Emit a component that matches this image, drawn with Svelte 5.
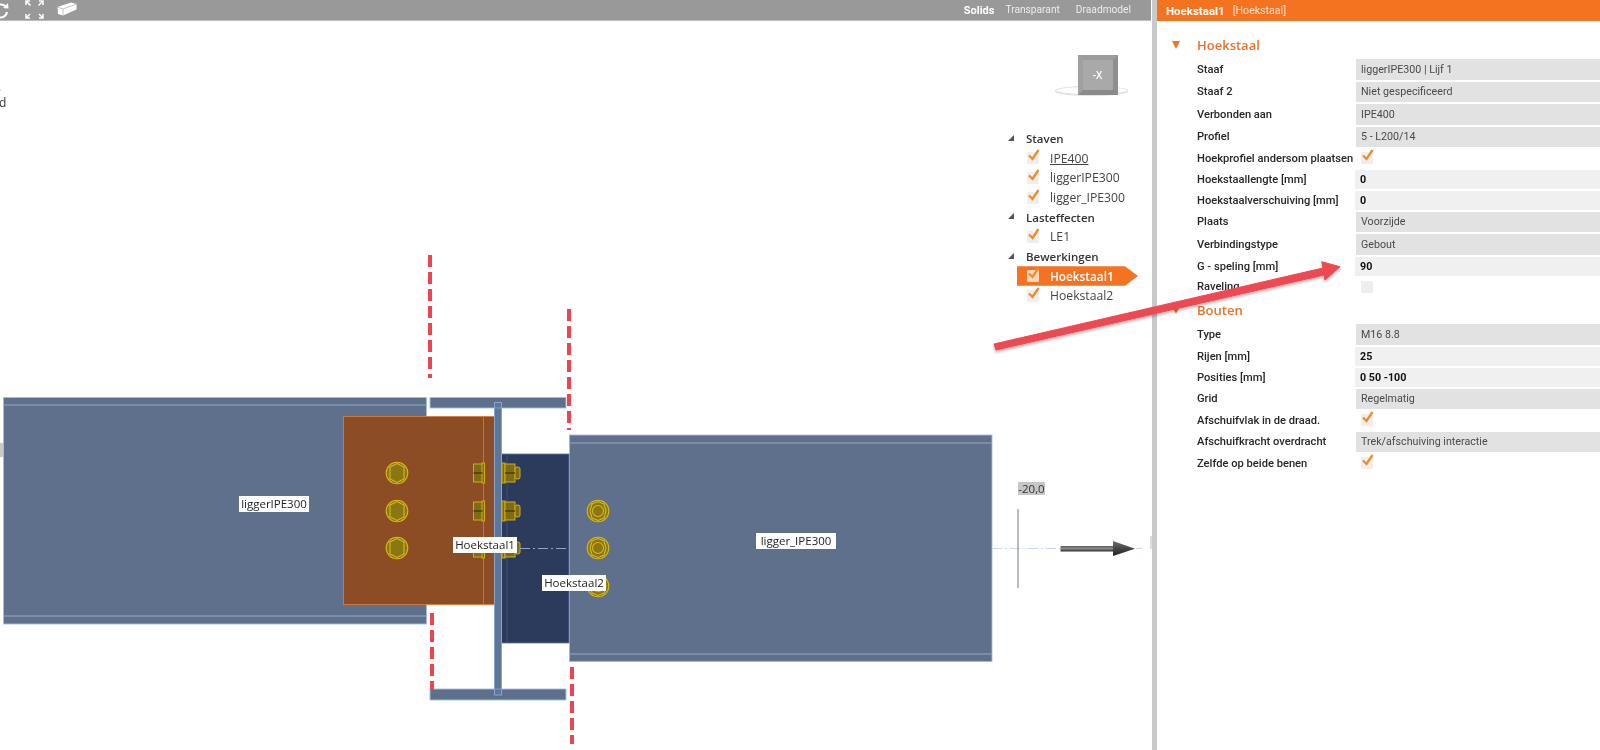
<script>
  const tree = [
    { type: 'group', label: 'Staven' },
    { type: 'item', label: 'IPE400', underline: true },
    { type: 'item', label: 'liggerIPE300' },
    { type: 'item', label: 'ligger_IPE300' },
    { type: 'group', label: 'Lasteffecten' },
    { type: 'item', label: 'LE1' },
    { type: 'group', label: 'Bewerkingen' },
    { type: 'item', label: 'Hoekstaal1', active: true },
    { type: 'item', label: 'Hoekstaal2' }
  ];
  const hoekstaal = [
    ['Staaf', 'dd', 'liggerIPE300 | Lijf 1'],
    ['Staaf 2', 'dd', 'Niet gespecificeerd'],
    ['Verbonden aan', 'dd', 'IPE400'],
    ['Profiel', 'dd', '5 - L200/14'],
    ['Hoekprofiel andersom plaatsen', 'cb', ''],
    ['Hoekstaallengte [mm]', 'in', '0'],
    ['Hoekstaalverschuiving [mm]', 'in', '0'],
    ['Plaats', 'dd', 'Voorzijde'],
    ['Verbindingstype', 'dd', 'Gebout'],
    ['G - speling [mm]', 'in', '90'],
    ['Raveling', 'off', '']
  ];
  const bouten = [
    ['Type', 'dd', 'M16 8.8'],
    ['Rijen [mm]', 'in', '25'],
    ['Posities [mm]', 'in', '0 50 -100'],
    ['Grid', 'dd', 'Regelmatig'],
    ['Afschuifvlak in de draad.', 'cb', ''],
    ['Afschuifkracht overdracht', 'dd', 'Trek/afschuiving interactie'],
    ['Zelfde op beide benen', 'cb', '']
  ];
  const sections = [
    { title: 'Hoekstaal', rows: hoekstaal },
    { title: 'Bouten', rows: bouten }
  ];
  const rowsY = [473, 511, 548];
</script>

{#snippet check()}
  <svg class="checkmark" viewBox="0 0 14 16" width="14" height="16" aria-hidden="true">
    <path d="M2 7.5 L5.5 11 L11.5 2" fill="none" stroke="#f28a25" stroke-width="2.3" />
  </svg>
{/snippet}

<div class="page">
  <main class="viewport">
    <header class="toolbar">
      <div class="tools">
        <svg class="icon-refresh" width="12" height="20" viewBox="0 0 12 20" aria-hidden="true">
          <path d="M0 4.5 A6.5 6.5 0 0 1 6.5 8" fill="none" stroke="#fff" stroke-width="2" />
          <path d="M3 8 L8.5 8.5 L8 3 Z" fill="#fff" />
          <path d="M7 12 A6.5 6.5 0 0 1 0 17.5" fill="none" stroke="#fff" stroke-width="2" />
        </svg>
        <svg class="icon-fit" width="19" height="19" viewBox="0 0 19 19" aria-hidden="true">
          <g fill="none" stroke="#fff" stroke-width="1.5">
            <path d="M1 5 V1 H5 M1 1 L5.5 5.5" />
            <path d="M14 1 H18 V5 M18 1 L13.5 5.5" />
            <path d="M1 14 V18 H5 M1 18 L5 14" />
            <path d="M14 18 H18 V14 M18 18 L14 14" />
          </g>
        </svg>
        <svg class="icon-box" width="20" height="14" viewBox="0 0 20 14" aria-hidden="true">
          <path d="M0.5 5 L14 0.5 L19.5 2 L19.5 7.5 L6 13.5 L1 12 Z" fill="#fff" />
          <path d="M0.5 5 L6 7 L19.5 2 M6 7 V13.5" fill="none" stroke="#b5b5b5" stroke-width="0.8" />
        </svg>
      </div>
      <nav class="modes">
        <span class="mode solid">Solids</span>
        <span class="mode">Transparant</span>
        <span class="mode">Draadmodel</span>
      </nav>
    </header>

    <div class="canvas">
      <svg class="drawing" width="1151" height="729" viewBox="0 21 1151 729" aria-label="Verbinding">
        <g class="steel">
          <rect x="3.5" y="397.5" width="423" height="226.5" />
          <rect x="430" y="397.5" width="136" height="10.5" />
          <rect x="430" y="689" width="136" height="11" />
          <rect x="569.5" y="435" width="422.5" height="226.5" />
        </g>
        <g stroke="#8fa9c6" stroke-width="1">
          <path d="M3.5 405 H426.5 M3.5 616 H426.5 M569.5 443 H992 M569.5 654 H992" />
        </g>
        <rect x="501.5" y="454" width="67.5" height="189" fill="#2c3a5c" stroke="#5b77a6" stroke-width="0.8" />
        <path d="M507 454 V643" stroke="#3d4f78" stroke-width="1" />
        <rect x="343.5" y="416.5" width="151" height="188" fill="#8c4d24" stroke="#d57c3f" stroke-width="0.9" />
        <path d="M483.5 416.5 V604.5" stroke="#cf6f33" stroke-width="1" />
        <rect x="494.5" y="402.5" width="7" height="292.5" fill="#5f769b" stroke="#86a4cc" stroke-width="1" />
        <path d="M494.5 408 H501.5 M494.5 689 H501.5" stroke="#86a4cc" stroke-width="0.8" />

        {#each rowsY as y}
          <g class="bolt">
            <circle cx="397" cy={y} r="10.8" />
            <polygon points={`390,${y - 6} 397,${y - 9.5} 404,${y - 6} 404,${y + 6} 397,${y + 9.5} 390,${y + 6}`} />
          </g>
          <g class="bolt-side">
            <rect x="473.5" y={y - 9} width="9" height="18" />
            <rect x="482" y={y - 10} width="2.5" height="20" />
            <path d={`M473.5 ${y} H482.5`} />
            <rect x="502" y={y - 10} width="3" height="20" />
            <rect x="505" y={y - 9} width="10" height="18" />
            <rect x="515" y={y - 6} width="5" height="12" rx="2" />
            <path d={`M505 ${y} H515`} />
          </g>
        {/each}
        {#each [511, 548, 586] as y}
          <g class="bolt">
            <circle cx="598" cy={y} r="10.8" />
            <polygon points={`592,${y - 7} 598,${y - 9.5} 604,${y - 7} 606,${y} 604,${y + 7} 598,${y + 9.5} 592,${y + 7} 590,${y}`} />
            <circle cx="598" cy={y} r="5.5" />
          </g>
        {/each}

        <path class="axis" d="M520 548.5 H569" />
        <path class="axis light" d="M992 548.5 H1142" />
        <path d="M1018 509 V588" stroke="#777" stroke-width="1" />
        <rect x="1018" y="482" width="27" height="13" fill="#c6c6c6" />
        <text x="1031.5" y="492.5" class="dim">-20,0</text>

        <defs>
          <linearGradient id="shaft" x1="0" x2="0" y1="0" y2="1">
            <stop offset="0" stop-color="#5a5a5a" />
            <stop offset="0.45" stop-color="#8c8c8c" />
            <stop offset="1" stop-color="#2d2d2d" />
          </linearGradient>
          <linearGradient id="head" x1="0" x2="0" y1="0" y2="1">
            <stop offset="0" stop-color="#6e6e6e" />
            <stop offset="1" stop-color="#1f1f1f" />
          </linearGradient>
        </defs>
        <rect x="1060.5" y="546" width="53" height="5.5" fill="url(#shaft)" />
        <polygon points="1113,541 1135,548.7 1113,556" fill="url(#head)" />

        <g class="cut">
          <path d="M430 255 V378" />
          <path d="M569 309 V430" />
          <path d="M432 613 V690" />
          <path d="M572 667 V744" />
        </g>

        <g class="tags">
          <rect x="239" y="496" width="70" height="16" /><text x="274" y="508">liggerIPE300</text>
          <rect x="756" y="533" width="80" height="16" /><text x="796" y="545">ligger_IPE300</text>
          <rect x="453" y="537" width="64" height="16" /><text x="485" y="549">Hoekstaal1</text>
          <rect x="542" y="575" width="64" height="16" /><text x="574" y="587">Hoekstaal2</text>
        </g>
      </svg>

      <span class="stub stub-a">.</span>
      <span class="stub stub-b">d</span>
      <span class="stub-box"></span>

      <div class="cube" aria-label="Aanzicht">
        <span class="ring"></span>
        <span class="face">-X</span>
      </div>

      <ul class="tree">
        {#each tree as node}
          {#if node.type === 'group'}
            <li class="group"><span class="caret"></span>{node.label}</li>
          {:else}
            <li class="item" class:active={node.active}>
              <span class="box">{@render check()}</span>
              <span class:under={node.underline}>{node.label}</span>
            </li>
          {/if}
        {/each}
      </ul>
    </div>
  </main>

  <div class="splitter"><span class="grip"></span></div>

  <aside class="panel">
    <header class="panel-head"><b>Hoekstaal1</b><span>[Hoekstaal]</span></header>
    <div class="panel-body">
      {#each sections as section}
        <section>
          <h2><span class="tri"></span>{section.title}</h2>
          {#each section.rows as [label, kind, value]}
            <div class="row {kind}">
              <span class="label">{label}</span>
              {#if kind === 'cb'}
                <span class="box">{@render check()}</span>
              {:else if kind === 'off'}
                <span class="box"></span>
              {:else}
                <span class="value">{value}</span>
              {/if}
            </div>
          {/each}
        </section>
      {/each}
    </div>
  </aside>

  <svg class="annotation" width="1600" height="750" viewBox="0 0 1600 750" aria-hidden="true">
    <defs>
      <filter id="soft" x="-5%" y="-20%" width="110%" height="150%">
        <feDropShadow dx="0" dy="2" stdDeviation="1.5" flood-color="#000" flood-opacity="0.3" />
      </filter>
    </defs>
    <path d="M994 344 L1323 268 L1321.7 261.7 L1340 266.7 L1325 280 L1324 275 L996 350 Z" fill="#ec4a52" stroke="#ec4a52" stroke-width="1" stroke-linejoin="round" filter="url(#soft)" />
  </svg>
</div>

<style>
  :global(body) {
    margin: 0;
    background: #fff;
  }
  .page {
    position: relative;
    display: flex;
    width: 1600px;
    height: 750px;
    overflow: hidden;
    background: #fff;
    font-family: "Open Sans", "Noto Sans", "Liberation Sans", sans-serif;
    font-size: 11.5px;
    color: #333;
    filter: blur(0.3px);
  }
  .viewport {
    position: relative;
    display: flex;
    flex-direction: column;
    width: 1151px;
    flex: none;
  }
  .toolbar {
    display: flex;
    align-items: center;
    justify-content: space-between;
    height: 20px;
    padding: 0 20px 0 0;
    background: #999;
    border-bottom: 1px solid #bdbdbd;
    flex: none;
  }
  .tools {
    display: flex;
    align-items: center;
  }
  .icon-refresh { margin-right: 13px; margin-top: -1px; }
  .icon-fit { margin-right: 13px; margin-top: -1px; }
  .icon-box { margin-top: -2px; }
  .modes {
    display: flex;
    gap: 16px;
    font-family: Roboto, "Liberation Sans", sans-serif;
    font-size: 10.2px;
    color: #ececec;
  }
  .mode.solid {
    font-weight: 700;
    font-size: 11px;
    color: #fff;
    margin-right: -5px;
  }
  .canvas {
    position: relative;
    flex: 1;
    background: #fff;
  }
  .drawing {
    position: absolute;
    inset: 0;
    display: block;
  }
  .steel rect {
    fill: #5f708c;
    stroke: #a3bedd;
    stroke-width: 0.9;
  }
  .bolt circle, .bolt polygon {
    fill: #8a7712;
    stroke: #d7b81c;
    stroke-width: 1.1;
  }
  .bolt-side rect {
    fill: #7f6c12;
    stroke: #cfae1a;
    stroke-width: 1;
  }
  .bolt-side path {
    stroke: #3b3008;
    stroke-width: 1.2;
  }
  .axis {
    stroke: #8ea3c0;
    stroke-width: 1;
    stroke-dasharray: 10 3 2 3;
    fill: none;
  }
  .axis.light {
    stroke: #c9d8ea;
  }
  .dim {
    font-size: 11.5px;
    fill: #333;
    text-anchor: middle;
  }
  .cut path {
    stroke: #ee4450;
    stroke-width: 4;
    stroke-dasharray: 12 5;
    fill: none;
  }
  .tags rect {
    fill: #fff;
  }
  .tags text {
    font-size: 11.5px;
    fill: #222;
    text-anchor: middle;
  }
  .stub {
    position: absolute;
    color: #333;
    font-size: 12px;
    line-height: 16px;
  }
  .stub-a { left: -2px; top: 58px; }
  .stub-b { left: -1px; top: 74px; }
  .stub-box {
    position: absolute;
    left: 0;
    top: 422px;
    width: 3px;
    height: 14px;
    background: #c8c8c8;
  }
  .cube {
    position: absolute;
    left: 1055px;
    top: 34px;
    width: 73px;
    height: 44px;
  }
  .ring {
    position: absolute;
    left: 0;
    right: 0;
    top: 31px;
    height: 9px;
    border: 1px solid #dcdcdc;
    border-radius: 50%;
    box-sizing: border-box;
    box-shadow: 0 1px 1px #e0e0e0;
  }
  .face {
    position: absolute;
    left: 22.5px;
    top: 0;
    width: 30px;
    height: 30px;
    display: flex;
    align-items: center;
    justify-content: center;
    background: #a9a9a9;
    border-style: solid;
    border-width: 5px;
    border-color: #9c9c9c #8e8e8e #8a8a8a #a0a0a0;
    color: #fff;
    font-size: 10px;
    font-weight: 600;
  }
  .tree {
    position: absolute;
    left: 1006px;
    top: 108px;
    width: 132px;
    margin: 0;
    padding: 0;
    list-style: none;
  }
  .tree li {
    display: flex;
    align-items: center;
    height: 19.6px;
  }
  .group {
    padding-left: 20px;
    font-weight: 600;
    color: #333;
    position: relative;
  }
  .caret {
    position: absolute;
    left: 2px;
    top: 6px;
    width: 0;
    height: 0;
    border-left: 6px solid transparent;
    border-bottom: 6px solid #555;
  }
  .item {
    padding-left: 21px;
    gap: 11px;
    color: #444;
    font-size: 12.2px;
  }
  .item .box { flex: none; }
  .item.active {
    margin-left: 11px;
    padding-left: 10px;
    background: #f47321;
    color: #fff;
    font-weight: 600;
    font-size: 11.8px;
    clip-path: polygon(0 0, 108px 0, 100% 50%, 108px 100%, 0 100%);
  }
  .item.active .box { background: #f5d9c4; }
  .under { text-decoration: underline; }
  .box {
    display: inline-flex;
    position: relative;
    width: 12px;
    height: 12px;
    background: #eeeeee;
    border-radius: 1px;
  }
  .checkmark {
    position: absolute;
    left: 0;
    top: -4px;
  }
  .splitter {
    position: relative;
    width: 5.5px;
    margin-left: 0.5px;
    flex: none;
    background: #c9c9c9;
  }
  .grip {
    position: absolute;
    left: -2px;
    top: 536px;
    width: 2px;
    height: 13px;
    background: #dcdcdc;
  }
  .panel {
    flex: 1;
    min-width: 0;
    display: flex;
    flex-direction: column;
    font-family: Roboto, "Liberation Sans", sans-serif;
    font-size: 10.7px;
  }
  .panel-head {
    display: flex;
    align-items: center;
    gap: 8px;
    height: 21px;
    padding-left: 9px;
    background: #f47321;
    color: #fbe3d2;
    flex: none;
    font-size: 10.6px;
  }
  .panel-head b {
    color: #fff;
    font-weight: 700;
    font-size: 11.5px;
  }
  .panel-body {
    padding-top: 14px;
  }
  section + section {
    margin-top: 3px;
  }
  h2 {
    position: relative;
    margin: 0;
    padding-left: 40px;
    height: 23px;
    line-height: 20px;
    font-family: "Open Sans", sans-serif;
    font-size: 13px;
    font-weight: 600;
    color: #e8732a;
  }
  .tri {
    position: absolute;
    left: 15px;
    top: 6px;
    width: 0;
    height: 0;
    border-left: 4.5px solid transparent;
    border-right: 4.5px solid transparent;
    border-top: 8px solid #f47321;
  }
  .row {
    display: flex;
    align-items: center;
    padding-left: 40px;
    box-sizing: border-box;
    height: 21px;
  }
  .row.dd { height: 22.5px; }
  .row.cb, .row.off { height: 20.5px; }
  .label {
    width: 159px;
    flex: none;
    font-weight: 500;
    color: #262626;
    white-space: nowrap;
    font-size: 11.15px;
  }
  .value {
    flex: 1;
    align-self: stretch;
    margin: 1px 0;
    display: flex;
    align-items: center;
    padding-left: 5px;
    background: #e2e2e2;
    color: #4a4a4a;
  }
  .row.in .value {
    background: #f0f0f0;
    color: #111;
    font-weight: 700;
    padding-left: 5px;
    margin-left: -1px;
  }
  .row .box {
    margin-left: 5px;
  }
  .annotation {
    position: absolute;
    left: 0;
    top: 0;
    pointer-events: none;
  }
</style>
